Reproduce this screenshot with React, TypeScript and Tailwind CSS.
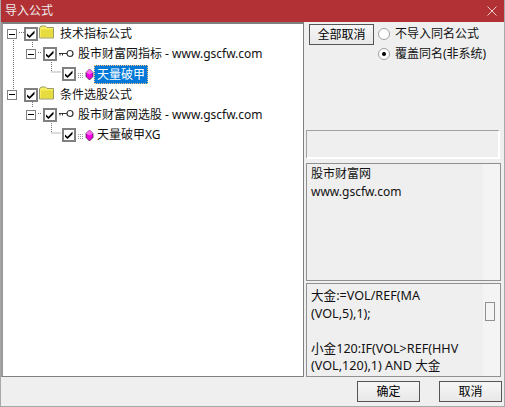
import type { ReactNode } from "react";

const font = { fontFamily: '"Noto Sans", "Noto Sans CJK SC", sans-serif' };

function Expander() {
  return (
    <div className="w-[10px] h-[10px] border border-[#808080] bg-white flex items-center justify-center shrink-0">
      <div className="w-[6px] h-px bg-black" />
    </div>
  );
}

function Check() {
  return (
    <div className="w-[14px] h-[14px] border-[2px] border-[#808080] bg-white shrink-0 flex items-center justify-center">
      <svg width="10" height="10" viewBox="0 0 10 10">
        <path d="M1 4.5l2.500 2.200L8.500 1.500v2.700L3.500 9 1 6.700z" fill="#000" />
      </svg>
    </div>
  );
}

function Folder() {
  return (
    <svg width="16" height="14" viewBox="0 0 16 14" className="shrink-0 -mt-[4px]">
      <path d="M.5 3 2 1h4.500L8 2.500h6.500v10.500H.5z" fill="#f7ef5f" stroke="#9a9a6a" />
      <path d="M2 4.500h12V12H2z" fill="#e6dc40" />
    </svg>
  );
}

function KeyIcon() {
  return (
    <svg width="15" height="9" viewBox="0 0 15 9" className="shrink-0 -mt-[2px]">
      <circle cx="11" cy="4.500" r="3" fill="#fff" stroke="#333" strokeWidth="1.200" />
      <path d="M0 4.500h8M1 4.500v2M3.500 4.500v2" stroke="#333" fill="none" />
    </svg>
  );
}

function Gem() {
  return (
    <svg width="16" height="13" viewBox="0 0 16 13" className="shrink-0">
      <path d="M0 5.500h6M0 7.500h6M0 9.500h6" stroke="#999" strokeDasharray="1 1" />
      <path d="M11.500 1l3.500 3.500v4L11.500 12 8 8.500v-4z" fill="#f000e0" stroke="#333" strokeWidth=".8" />
      <path d="M11.500 1 8 4.500l3.500 2 3.500-2z" fill="#ff66f0" />
    </svg>
  );
}

function Row({ children, pad }: { children: ReactNode; pad: string }) {
  return <div className={`h-[20.2px] flex items-center relative ${pad}`}>{children}</div>;
}

function Radio({ on, label }: { on?: boolean; label: string }) {
  return (
    <div className="flex items-center gap-[5px] h-[20px]">
      <div className="w-[12px] h-[12px] rounded-full bg-white border border-[#a0a0a0] flex items-center justify-center">
        {on && <div className="w-[4px] h-[4px] rounded-full bg-black" />}
      </div>
      <span>{label}</span>
    </div>
  );
}

function Btn({ label, className }: { label: string; className: string }) {
  return (
    <button className={`h-[21px] border border-[#555] bg-gradient-to-b from-[#f6f6f6] to-[#e8e8e8] text-[12px] text-black ${className}`}>
      {label}
    </button>
  );
}

export default function App() {
  return (
    <div style={font} className="w-[505px] h-[407px] flex flex-col bg-[#efefef] text-[12px] leading-[18px] text-[#111] overflow-hidden border-b border-l border-r border-[#a8a8a8]">
      <div className="h-[22px] -mx-px bg-[#b23135] text-[#eeeeee] flex items-center justify-between pl-[5px] pr-[8px] shrink-0">
        <span className="text-[12px]">导入公式</span>
        <svg width="10" height="10" viewBox="0 0 10 10">
          <path d="M.5.5l9 9M9.5.5l-9 9" stroke="#e8d0d0" />
        </svg>
      </div>

      <div className="flex h-[355px] shrink-0">
        <div className="w-[303px] shrink-0 bg-white border-[2px] border-r border-b border-t-[#808080] border-l-[#9a9a9a] border-r-[#808080] border-b-[#808080] relative">
          <svg width="100" height="130" className="absolute left-0 top-0" fill="none" stroke="#777" strokeDasharray="1 1">
            <path d="M10.500 14v60M16 8.500h6M29.500 16v8M35 28.500h4M48.500 38v10h9M29.500 76v8M35 89.500h4M48.500 99v10h9" />
          </svg>
          <Row pad="pl-[4px]">
            <Expander />
            <div className="w-[7px]" />
            <Check />
            <div className="w-[1px]" />
            <Folder />
            <span className="ml-[5px]">技术指标公式</span>
          </Row>
          <Row pad="pl-[23px]">
            <Expander />
            <div className="w-[7px]" />
            <Check />
            <div className="w-[2px]" />
            <KeyIcon />
            <span className="ml-[4px]">股市财富网指标 - www.gscfw.com</span>
          </Row>
          <Row pad="pl-[59px]">
            <Check />
            <div className="w-[2px]" />
            <Gem />
            <span className="ml-0 px-[2px] h-[19px] bg-[#0078d7] text-white border border-dotted border-[#ffc080]">天量破甲</span>
          </Row>
          <Row pad="pl-[4px]">
            <Expander />
            <div className="w-[7px]" />
            <Check />
            <div className="w-[1px]" />
            <Folder />
            <span className="ml-[5px]">条件选股公式</span>
          </Row>
          <Row pad="pl-[23px]">
            <Expander />
            <div className="w-[7px]" />
            <Check />
            <div className="w-[2px]" />
            <KeyIcon />
            <span className="ml-[4px]">股市财富网选股 - www.gscfw.com</span>
          </Row>
          <Row pad="pl-[59px]">
            <Check />
            <div className="w-[2px]" />
            <Gem />
            <span className="ml-[3px]">天量破甲XG</span>
          </Row>
        </div>

        <div className="flex-1 flex flex-col px-[2px]">
          <div className="h-[108px] flex items-start gap-[4px] pl-[3px] pt-[2px]">
            <Btn label="全部取消" className="w-[65px]" />
            <div className="flex flex-col">
              <Radio label="不导入同名公式" />
              <Radio on label="覆盖同名(非系统)" />
            </div>
          </div>
          <div className="h-[29px] mr-[2px] border-t border-l border-[#a0a0a0] border-r-2 border-b-2 border-r-white border-b-white" />
          <div className="h-[118px] mt-[4px] mr-[1px] border border-[#909090] flex">
            <div className="flex-1 px-[4px] pt-[1px]">
              <p>股市财富网</p>
              <p>www.gscfw.com</p>
            </div>
            <div className="w-[17px] bg-[#f4f4f4]" />
          </div>
          <div className="h-[94px] mt-[2px] mr-[1px] border border-[#909090] flex relative text-[12.6px] leading-[17.500px]">
            <div className="flex-1 pl-[4px] pt-[3px]">
              <p>大金:=VOL/REF(MA</p>
              <p>(VOL,5),1);</p>
              <p className="h-[17.500px]" />
              <p>小金120:IF(VOL&gt;REF(HHV</p>
              <p>(VOL,120),1) AND 大金</p>
            </div>
            <div className="w-[17px] bg-[#f4f4f4]" />
            <div className="absolute top-[18px] right-[5px] w-[10px] h-[19px] border border-[#909090]" />
          </div>
        </div>
      </div>

      <div className="flex-1 flex items-start justify-end gap-[19px] pr-[2px] pt-[4px]">
        <Btn label="确定" className="w-[63px]" />
        <Btn label="取消" className="w-[63px]" />
      </div>
    </div>
  );
}
